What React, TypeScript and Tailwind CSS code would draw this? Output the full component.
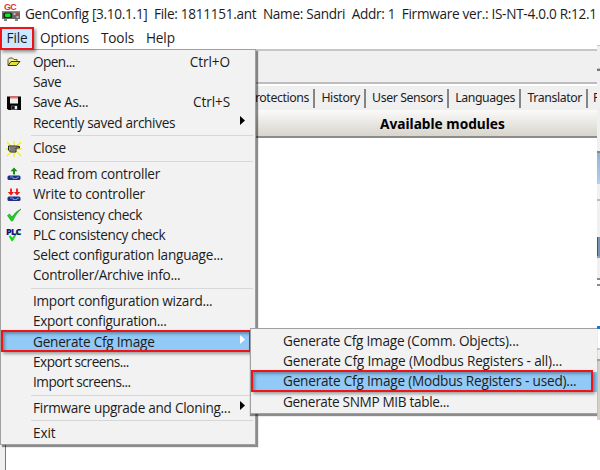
import React from 'react';
import clsx from 'clsx';

interface MenuEntry {
  label: string;
  spacing?: string;
  shortcut?: string;
  icon?: React.ReactNode;
  arrow?: boolean;
  active?: boolean;
}

const OpenIcon = () => (
  <svg width="14" height="12" viewBox="0 0 14 12">
    <path d="M1 9V3.5L2.5 2h3L7 3.5h3V5" fill="#f4ee7c" stroke="#555" strokeWidth="1" />
    <path d="M1 9.5 4 5.5h9L9.5 9.5z" fill="#e8df35" stroke="#333" strokeWidth="1" />
  </svg>
);

const SaveIcon = () => (
  <svg width="14" height="14" viewBox="0 0 14 14">
    <path d="M0 .5h14V14H1.500L0 12.500z" fill="#050505" />
    <path d="M3 1h8v6.500H3z" fill="#eee" />
    <path d="M3 .5h8v2H3z" fill="#f66" />
    <path d="M4 9.500h6.500V14H4z" fill="#555" />
    <path d="M5 10.500h2V13H5z" fill="#111" />
    <path d="M8 10h2v3H8z" fill="#eee" />
  </svg>
);

const CloseIcon = () => (
  <svg width="16" height="16" viewBox="0 0 16 16">
    <path d="M1 1l14 14M15 1 1 15M8 0v16M0 8h16" stroke="#f5ee18" strokeWidth="1.300" />
    <path d="M2.500 5h7l4 .5v1.500H10v4H4.500L2.500 9z" fill="#aaa" stroke="#222" />
    <path d="M4 7h6M4 9h5" stroke="#333" strokeWidth=".8" />
  </svg>
);

const ReadIcon = () => (
  <svg width="14" height="14" viewBox="0 0 14 14">
    <path d="M7 .5 3.500 4.200h2.500V7.500h2V4.200h2.500z" fill="#159015" />
    <rect x=".5" y="8.500" width="13" height="4.500" rx="1.500" fill="#1b2f8c" />
    <path d="M3 10h3v1.500h4V10.200h2" fill="none" stroke="#97a9b9" strokeWidth=".8" />
  </svg>
);

const WriteIcon = () => (
  <svg width="14" height="14" viewBox="0 0 14 14">
    <path d="M4 7.500 .8 4h2.300V.5h1.800V4H7L10 7.500 13.200 4h-2.300V.5H9.100V4H7z" fill="#f01414" />
    <rect x=".5" y="8.500" width="13" height="4.500" rx="1.500" fill="#1b2f8c" />
    <path d="M3 10h3v1.500h4V10.200h2" fill="none" stroke="#97a9b9" strokeWidth=".8" />
  </svg>
);

const CheckIcon = () => (
  <svg width="14" height="14" viewBox="0 0 14 14">
    <path d="M.5 7.500 2.500 6l2.500 3Q8.500 3.500 14 1 9 5.500 5.500 13H4.300z" fill="#11d911" stroke="#23852a" strokeWidth=".6" />
  </svg>
);

const PlcIcon = () => (
  <span className="relative block h-[14px] w-[15px]">
    <svg className="absolute top-[2px] left-[2px]" width="12" height="12" viewBox="0 0 14 14">
      <path d="M1 7.500 2.500 6l2.500 3Q8.500 3.500 14 1 9 5.500 5.500 13H4.300z" fill="#11d911" />
    </svg>
    <span className="absolute -top-px left-0 text-[9px] leading-[10px] font-extrabold tracking-[-0.7px] text-[#101578]">PLC</span>
  </span>
);

const AppIcon = () => (
  <span className="relative block h-[19px] w-[18px] shrink-0">
    <span className="absolute top-0 left-[2px] font-['Liberation_Sans'] text-[9px] leading-[9px] font-bold tracking-[-0.8px] text-[#e83030]">GC</span>
    <svg className="absolute top-[8px] left-0" width="18" height="10" viewBox="0 0 18 10">
      <path d="M0 0h18v8H0z" fill="#686868" />
      <path d="M0 0h18v1.500H0z" fill="#8c8c8c" />
      <rect x="1.500" y="1.500" width="8.500" height="5.500" rx="1.500" fill="#0a300a" />
      <rect x="3" y="2.500" width="5.500" height="3.500" rx="1" fill="#15e235" />
      <path d="M11.500 2h2v2h-2zM14.500 5h2v2h-2z" fill="#bbb" />
      <path d="M14 2h2v2h-2z" fill="#d33" />
      <path d="M2 8h3v2H2zM13 8h3v2h-3z" fill="#888" />
    </svg>
  </span>
);

const Arrow = ({ light }: { light?: boolean }) => (
  <svg className="mr-[10px] mb-[8px] self-end" width="5" height="9" viewBox="0 0 5 9">
    <path d="M0 0l5 4.500-5 4.500z" fill={light ? '#fff' : '#000'} />
  </svg>
);

const fileMenu: MenuEntry[][] = [
  [
    { label: 'Open...', spacing: 'tracking-[-0.55px]', shortcut: 'Ctrl+O', icon: <OpenIcon /> },
    { label: 'Save', spacing: 'tracking-[-0.3px]' },
    { label: 'Save As...', spacing: 'tracking-[-0.35px]', shortcut: 'Ctrl+S', icon: <SaveIcon /> },
    { label: 'Recently saved archives', spacing: 'tracking-[-0.33px]', arrow: true },
  ],
  [{ label: 'Close', spacing: 'tracking-[-0.3px]', icon: <CloseIcon /> }],
  [
    { label: 'Read from controller', spacing: 'tracking-[-0.22px]', icon: <ReadIcon /> },
    { label: 'Write to controller', spacing: 'tracking-[-0.2px]', icon: <WriteIcon /> },
    { label: 'Consistency check', spacing: 'tracking-[-0.37px]', icon: <CheckIcon /> },
    { label: 'PLC consistency check', spacing: 'tracking-[-0.4px]', icon: <PlcIcon /> },
    { label: 'Select configuration language...', spacing: 'tracking-[-0.23px]' },
    { label: 'Controller/Archive info...', spacing: 'tracking-[-0.27px]' },
  ],
  [
    { label: 'Import configuration wizard...', spacing: 'tracking-[-0.27px]' },
    { label: 'Export configuration...', spacing: 'tracking-[-0.3px]' },
    { label: 'Generate Cfg Image', spacing: 'tracking-[-0.22px]', arrow: true, active: true },
    { label: 'Export screens...', spacing: 'tracking-[-0.5px]' },
    { label: 'Import screens...', spacing: 'tracking-[-0.5px]' },
  ],
  [{ label: 'Firmware upgrade and Cloning...', spacing: 'tracking-[-0.28px]', arrow: true }],
  [{ label: 'Exit', spacing: 'tracking-[-0.1px]' }],
];

const subMenu: MenuEntry[] = [
  { label: 'Generate Cfg Image (Comm. Objects)...', spacing: 'tracking-[-0.24px]' },
  { label: 'Generate Cfg Image (Modbus Registers - all)...', spacing: 'tracking-[-0.17px]' },
  { label: 'Generate Cfg Image (Modbus Registers - used)...', spacing: 'tracking-[-0.21px]', active: true },
  { label: 'Generate SNMP MIB table...', spacing: 'tracking-[-0.34px]' },
];

const tabs = [
  { label: 'Protections', width: 'w-[67px]' },
  { label: 'History', width: 'w-[51px]' },
  { label: 'User Sensors', width: 'w-[83px]' },
  { label: 'Languages', width: 'w-[72px]' },
  { label: 'Translator', width: 'w-[67px]' },
];

const MenuRow = ({ item }: { item: MenuEntry }) => (
  <div className={clsx('relative flex h-[20.25px] items-center', item.active && 'bg-[#91c9f7]')}>
    <span className="flex w-[32px] shrink-0 justify-center pr-[7px]">{item.icon}</span>
    <span className={clsx('flex-1 whitespace-nowrap', item.spacing)}>{item.label}</span>
    {item.shortcut && <span className="mr-[25px] tracking-[-0.1px]">{item.shortcut}</span>}
    {item.arrow && <Arrow light={item.active} />}
    {item.active && (
      <div className="absolute -top-[1.5px] bottom-0 left-0 right-[4px] border-2 border-[#f01418] shadow-[2px_2px_3px_rgba(0,0,0,0.35),inset_2px_2px_3px_rgba(0,0,0,0.3)]" />
    )}
  </div>
);

// Slice of the neighbouring window along the right edge
const EdgeStrip = () => (
  <div className="flex w-[3px] shrink-0 flex-col bg-white">
    <div className="mt-[45px] h-px bg-[#c4c4c4]" />
    <div className="h-[22px] bg-[#f0f0f0]" />
    <div className="h-px bg-[#c0c0c0]" />
    <div className="h-[2px] bg-[#777]" />
    <div className="h-[80px] bg-[#f0f0f0]" />
    <div className="h-[2px] bg-[#888]" />
    <div className="h-[31px] bg-linear-to-b from-[#93b2d2] to-[#b4cff0]" />
    <div className="h-[15px] bg-[#f0f0f0]" />
    <div className="h-[2px] bg-[#bbb]" />
    <div className="h-[36px] bg-[#f0f0f0]" />
    <div className="h-[19px] border-l border-[#e81317] bg-[#7894b5]" />
    <div className="h-[2px] bg-[#8ba3bf]" />
    <div className="h-[20px] bg-[#f0f0f0]" />
    <div className="h-[2px] bg-[#888]" />
    <div className="mt-[4px] h-[2px] bg-[#888]" />
    <div className="mt-[40px] h-[3px] bg-[#1879cf]" />
    <div className="mt-[19px] h-[2px] bg-[#b5cce2]" />
    <div className="h-[9px] bg-[#eeeeec]" />
    <div className="h-[2px] bg-[#a5a29b]" />
    <div className="h-[59px] bg-[#d4d0c8]" />
  </div>
);

const App: React.FC = () => {
  return (
    <div className="relative flex h-[470px] w-[600px] overflow-hidden bg-white font-['Open_Sans','Noto_Sans',sans-serif] text-[13.6px] text-[#1c1c1c]">
      <div className="flex w-[597px] flex-col">
        <header className="flex h-[27px] items-start pt-[3px] pl-[2px]">
          <AppIcon />
          <h1 className="ml-[5px] leading-[21px] tracking-[-0.29px] whitespace-pre">GenConfig [3.10.1.1]  File: 1811151.ant  Name: Sandri  Addr: 1  Firmware ver.: IS-NT-4.0.0 R:12.1</h1>
        </header>

        <nav className="flex h-[22px] items-center tracking-[-0.15px]">
          <span className="z-20 flex h-[23px] w-[34px] items-center justify-center border-2 border-[#f01418] bg-[#cce8ff] shadow-[2px_2px_3px_rgba(0,0,0,0.4)]">File</span>
          <span className="ml-[6px] w-[61px]">Options</span>
          <span className="w-[45px]">Tools</span>
          <span>Help</span>
        </nav>

        <div className="h-[35px] shrink-0 border-t-2 border-b-2 border-t-[#c6c6c6] border-b-[#bdbdbd] bg-[#f0f0f0]" />

        <div className="flex h-[26px] shrink-0 items-center border-t-2 border-white bg-[#f0f0f0] pl-[248px] font-['Noto_Sans'] text-[12.3px] tracking-[-0.4px]">
          {tabs.map((tab) => (
            <div key={tab.label} className={clsx('flex h-[19px] shrink-0 items-center justify-end border-r-2 border-[#858585] pr-[4px]', tab.width)}>
              {tab.label}
            </div>
          ))}
          <span className="ml-[5px] w-[4px] overflow-hidden">P</span>
        </div>

        <div className="flex h-[28px] shrink-0 items-center border-b-2 border-[#8b8b89] bg-linear-to-b from-[#fafaf9] to-[#d8d5cd] pt-[2px] pl-[380px] font-['Noto_Sans'] text-[13.7px] font-bold text-black">
          <span className="whitespace-nowrap">Available modules</span>
        </div>

        <main className="flex-1 bg-white">
          <div className="h-full w-[6px] border-r border-[#777] bg-[#f0f0f0]" />
        </main>
      </div>
      <EdgeStrip />

      {/* File menu */}
      <div className="absolute top-[49px] left-0 z-10 h-[396px] w-[256px] border border-[#a0a0a0] bg-[#f2f2f2] pt-[2px] shadow-[2px_2px_1px_rgba(0,0,0,0.45)]">
        {fileMenu.map((group, index) => (
          <div key={index}>
            {index > 0 && (
              <div className="flex h-[5.45px] items-center pl-[30px]">
                <div className="mr-[2px] h-px flex-1 bg-[#d7d7d7]" />
              </div>
            )}
            {group.map((item) => (
              <MenuRow key={item.label} item={item} />
            ))}
          </div>
        ))}
      </div>

      {/* Generate Cfg Image submenu */}
      <div className="absolute top-[328px] left-[250px] z-10 h-[86px] w-[347px] border border-r-0 border-[#a0a0a0] bg-[#f2f2f2] pt-[2px] shadow-[0_2px_1px_rgba(0,0,0,0.45)]">
        {subMenu.map((item) => (
          <MenuRow key={item.label} item={item} />
        ))}
      </div>
    </div>
  );
};

export default App;
